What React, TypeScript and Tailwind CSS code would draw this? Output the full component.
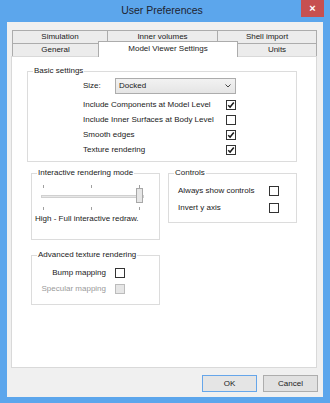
import type { ReactNode } from "react"

const font = { fontFamily: '"Liberation Sans", Arial, sans-serif' }

function Check({ checked = false, disabled = false }: { checked?: boolean; disabled?: boolean }) {
  return (
    <div
      className={
        disabled
          ? "flex h-[10px] w-[10px] items-center justify-center border border-[#bcbcbc] bg-[#e6e6e6]"
          : "flex h-[10px] w-[10px] items-center justify-center border border-[#333333] bg-white"
      }
    >
      {checked && (
        <svg width="8" height="8" viewBox="0 0 8 8">
          <path d="M1.2 4.2 L3.1 6.1 L6.8 1.6" fill="none" stroke="#1a1a1a" strokeWidth="1.5" />
        </svg>
      )}
    </div>
  )
}

function Group({ title, className, children }: { title: string; className: string; children: ReactNode }) {
  return (
    <div className={"relative border border-[#dcdcdc] " + className}>
      <span className="absolute -top-[6px] left-[5px] bg-white px-[1px] text-[8px] leading-[10px] text-[#1a1a1a]">
        {title}
      </span>
      {children}
    </div>
  )
}

function Tab({ label, className }: { label: string; className: string }) {
  return (
    <div
      className={
        "flex items-center justify-center border-t border-l border-[#acacac] bg-[#ececec] text-[8px] text-[#1a1a1a] " +
        className
      }
    >
      {label}
    </div>
  )
}

export default function App() {
  return (
    <div className="flex h-[403px] w-[330px] flex-col bg-[#5ca6ec]" style={font}>
      <div className="flex h-[22px] items-start">
        <div className="flex h-[22px] flex-1 items-center justify-center pl-[23px] text-[10.5px] text-[#1e2430]">
          User Preferences
        </div>
        <div className="mr-[6px] flex h-[17px] w-[23px] items-center justify-center bg-[#c75050] text-[11px] font-bold text-white">
          ×
        </div>
      </div>

      <div className="mx-[7px] mb-[6px] flex flex-1 flex-col bg-[#f0f0f0] pl-[4px] pr-[6px] pt-[8px]">
        <div className="relative ml-[1px] flex flex-col">
          <div className="flex h-[13px] border-r border-[#acacac]">
            <Tab label="Simulation" className="w-[95px]" />
            <Tab label="Inner volumes" className="w-[110px]" />
            <Tab label="Shell import" className="flex-1" />
          </div>
          <div className="flex h-[13px] items-end border-r border-[#acacac]">
            <Tab label="General" className="h-[13px] w-[86px]" />
            <div className="relative z-10 -mb-[1px] flex h-[16px] w-[140px] items-start justify-center border-x border-t border-[#acacac] bg-white pt-[1px] text-[8px] text-[#1a1a1a]">
              Model Viewer Settings
            </div>
            <Tab label="Units" className="h-[13px] flex-1 border-l-0" />
          </div>
        </div>

        <div className="flex h-[312px] flex-col border border-[#d9d9d9] bg-white text-[8px] text-[#1a1a1a]">
          <Group title="Basic settings" className="ml-[15px] mt-[14px] h-[91px] w-[270px]">
            <div className="flex flex-col pl-[55px] pt-[6px]">
              <div className="flex items-center">
                <span className="w-[32px]">Size:</span>
                <div className="flex h-[16px] w-[121px] items-center justify-between border border-[#acacac] bg-gradient-to-b from-[#f2f2f2] to-[#e5e5e5] pl-[3px] pr-[4px]">
                  <span>Docked</span>
                  <svg width="6" height="4" viewBox="0 0 6 4">
                    <path d="M0.5 0.5 L3 3 L5.5 0.5" fill="none" stroke="#444" strokeWidth="1" />
                  </svg>
                </div>
              </div>
              <div className="mt-[3px] flex flex-col">
                {[
                  ["Include Components at Model Level", true],
                  ["Include Inner Surfaces at Body Level", false],
                  ["Smooth edges", true],
                  ["Texture rendering", true],
                ].map(([label, on]) => (
                  <div key={label as string} className="flex h-[15px] items-center">
                    <span className="w-[143px]">{label as string}</span>
                    <Check checked={on as boolean} />
                  </div>
                ))}
              </div>
            </div>
          </Group>

          <div className="ml-[19px] mt-[11px] flex items-start gap-[8px]">
            <div className="flex flex-col">
              <Group title="Interactive rendering mode" className="h-[67px] w-[129px]">
                <svg width="120" height="40" viewBox="0 0 120 40" className="ml-[8px] mt-[10px] block">
                  <line x1="3.5" y1="1" x2="3.5" y2="4" stroke="#a0a0a0" />
                  <line x1="51.5" y1="1" x2="51.5" y2="4" stroke="#a0a0a0" />
                  <line x1="99.5" y1="1" x2="99.5" y2="4" stroke="#a0a0a0" />
                  <rect x="1.5" y="11.5" width="102" height="2" fill="#e7e7e7" stroke="#d0d0d0" />
                  <rect x="96.5" y="4.5" width="6" height="14" fill="#e6e6e6" stroke="#a8a8a8" />
                  <line x1="3.5" y1="23" x2="3.5" y2="26" stroke="#a0a0a0" />
                  <line x1="51.5" y1="23" x2="51.5" y2="26" stroke="#a0a0a0" />
                  <line x1="99.5" y1="23" x2="99.5" y2="26" stroke="#a0a0a0" />
                </svg>
                <div className="-mt-[11px] pl-[3px]">High - Full interactive redraw.</div>
              </Group>

              <Group title="Advanced texture rendering" className="mt-[15px] h-[50px] w-[129px]">
                <div className="flex flex-col pt-[9px]">
                  <div className="flex h-[16px] items-center">
                    <span className="w-[74px] text-right">Bump mapping</span>
                    <span className="ml-[9px]">
                      <Check />
                    </span>
                  </div>
                  <div className="flex h-[16px] items-center text-[#9a9a9a]">
                    <span className="w-[74px] text-right">Specular mapping</span>
                    <span className="ml-[9px]">
                      <Check disabled />
                    </span>
                  </div>
                </div>
              </Group>
            </div>

            <Group title="Controls" className="h-[50px] w-[129px]">
              <div className="flex flex-col pl-[9px] pt-[9px]">
                <div className="flex h-[16px] items-center">
                  <span className="w-[91px]">Always show controls</span>
                  <Check />
                </div>
                <div className="flex h-[17px] items-center">
                  <span className="w-[91px]">Invert y axis</span>
                  <Check />
                </div>
              </div>
            </Group>
          </div>
        </div>

        <div className="mt-[7px] flex justify-end gap-[6px] pr-[-1px] text-[8px] text-[#1a1a1a]">
          <div className="flex h-[17px] w-[55px] items-center justify-center border border-[#66a6ea] bg-[#e5e5e5]">
            OK
          </div>
          <div className="-mr-[1px] flex h-[17px] w-[55px] items-center justify-center border border-[#adadad] bg-[#e1e1e1]">
            Cancel
          </div>
        </div>
      </div>
    </div>
  )
}
